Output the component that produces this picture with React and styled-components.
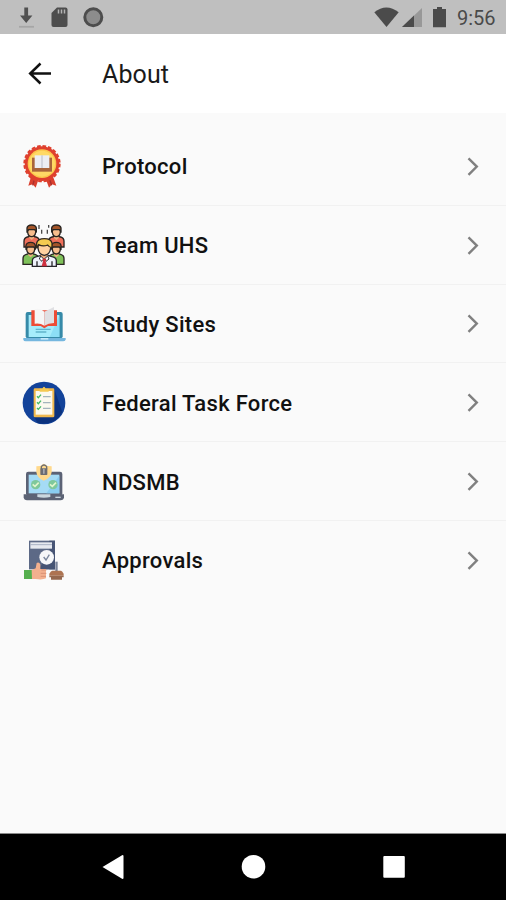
import styled, { createGlobalStyle } from "styled-components";

const GlobalStyle = createGlobalStyle`
  body {
    margin: 0;
    background: #fafafa;
    font-family: Roboto, "Liberation Sans", sans-serif;
  }
`;

const Screen = styled.div`
  width: 506px;
  height: 900px;
  display: flex;
  flex-direction: column;
  overflow: hidden;
  background: #fafafa;
`;

const StatusBar = styled.div`
  height: 34px;
  flex: none;
  display: flex;
  justify-content: space-between;
  background: #bfbfbf;
`;

const StatusGroup = styled.div`
  display: flex;
`;

const Clock = styled.span`
  width: 49px;
  line-height: 36px;
  font-size: 20px;
  color: #4a4a4a;
`;

const Header = styled.header`
  height: 79px;
  flex: none;
  display: flex;
  align-items: center;
  background: #fff;
`;

const BackButton = styled.button`
  width: 102px;
  height: 79px;
  padding: 0;
  border: none;
  background: none;
  text-align: left;
  display: flex;
`;

const Title = styled.h1`
  margin: 0;
  padding-top: 2px;
  font-size: 25px;
  font-weight: 400;
  letter-spacing: 0.1px;
  color: #1a1a1a;
`;

const Menu = styled.ul`
  flex: 1;
  margin: 0;
  padding: 14px 0 0;
  list-style: none;
`;

const MenuItem = styled.li`
  height: 78.8px;
  box-sizing: border-box;
  display: flex;
  align-items: center;
  padding: 2px 21px 0 15px;
  border-bottom: 1px solid ${({ $last }) => ($last ? "transparent" : "#f1f1f1")};
`;

const Label = styled.span`
  flex: 1;
  margin-left: 27px;
  font-size: 22px;
  font-weight: 500;
  letter-spacing: 0.3px;
  color: #111;
`;

const NavBar = styled.nav`
  height: 66px;
  flex: none;
  display: flex;
  justify-content: center;
  background: #000;
  border-top: 1px solid #8a8a8a;
`;

const ProtocolIcon = () => (
  <svg width="60" height="60" viewBox="0 -5 180 180">
    <path d="M50 108 40 141l13-4 9 10 11-32zM112 108l12 33-13-4-9 10-12-32z" fill="#d9402f" />
    <path d="M59 120l-6 20M103 120l7 20" stroke="#a92f2c" strokeWidth="4" />
    <circle cx="81" cy="75" r="52" fill="#df402e" />
    <circle cx="81" cy="75" r="53" fill="none" stroke="#df402e" strokeWidth="6" strokeDasharray="11 5.65" />
    <circle cx="81" cy="75" r="43" fill="#fbc64c" />
    <circle cx="81" cy="75" r="39" fill="#ffd965" />
    <path d="M51 57h60v42H51z" fill="#a9653b" />
    <path d="M59 50h44v38H59z" fill="#eceef3" />
    <path d="M81 50v38" stroke="#b8bcc8" strokeWidth="3" />
  </svg>
);

const Person = ({ x, y, body, hair }) => (
  <g transform={`translate(${x} ${y})`} stroke="#292522" strokeWidth="4">
    <path d="M-23 62V45q0-10 10-13l8-2H5l8 2q10 3 10 13v17z" fill={body} />
    <path d="M-7 27h14v8l-7 6-7-6z" fill="#efb080" stroke="none" />
    <path d="M-12 8h24v10q-2 13-12 13T-12 18z" fill="#f7bd8d" />
    <path d="M-14 15V5Q-12-4 0-4T14 5v10l-5-5H-9z" fill={hair} />
  </g>
);

const TeamIcon = () => (
  <svg width="60" height="60" viewBox="0 -3 180 180">
    <Person x={50} y={28} body="#ef705b" hair="#a45529" />
    <Person x={124} y={28} body="#ef705b" hair="#a45529" />
    <path d="M72 24v12M80 38v12M97 38v12M101 24v8" stroke="#4b4b4b" strokeWidth="4" />
    <Person x={47} y={80} body="#7fc15a" hair="#a45529" />
    <Person x={124} y={80} body="#7fc15a" hair="#a45529" />
    <path d="M52 148v-17q0-9 13-12l14-4h18l14 4q13 3 13 12v17z" fill="#eef1fa" stroke="#28272c" strokeWidth="4" />
    <path d="M77 103h21v14l-10 10-11-10z" fill="#f0ad79" />
    <path d="M69 84h38v9q-2 20-19 22-17-2-19-22z" fill="#ffd0a0" stroke="#28272c" strokeWidth="4" />
    <path d="M65 94V78q3-13 23-13t23 13v14q-8 0-13-8-14 6-27-1z" fill="#f4ca50" stroke="#33291f" strokeWidth="4" />
    <path d="M77 117l10 10 11-10 4 9-9 7-6-6-6 6-8-7z" fill="#fff" stroke="#28272c" strokeWidth="3" />
    <path d="M82 125h12l-2 8 4 15H80l4-15z" fill="#cf3140" />
    <path d="M66 133v15M111 133v15" stroke="#28272c" strokeWidth="4" />
  </svg>
);

const StudyIcon = () => (
  <svg width="60" height="60" viewBox="0 -3 180 180">
    <rect x="32" y="51" width="111" height="79" rx="6" fill="#368aa8" />
    <path d="M41 60h92v66H41z" fill="#a6ecfb" />
    <path d="M104 126l29-64v64z" fill="#8cdef6" />
    <path d="M49 46h77v47H99l-11 7-11-7H49z" fill="#ed4c36" />
    <path d="M59 42q17-4 29 8v42q-13-9-29-6z" fill="#f6f6f6" />
    <path d="M88 50l29-14v48q-17 0-29 8z" fill="#e0e0e3" />
    <path d="M62 103h45M62 111h32" stroke="#62b4cc" strokeWidth="4" />
    <path d="M25 129h127v5q-2 5-8 5H32q-6 0-7-5z" fill="#75b7df" />
    <path d="M77 129h23v5H77z" fill="#c4e9fb" />
  </svg>
);

const TaskIcon = () => (
  <svg width="60" height="60" viewBox="0 -1 180 180">
    <circle cx="87" cy="89" r="64" fill="#13439a" />
    <path d="M58 131l10 19q54 7 74-33l-24-70z" fill="#0b327e" />
    <rect x="56" y="45" width="62" height="87" rx="4" fill="#efb84d" />
    <path d="M62 53h50v71H62z" fill="#fbf9ef" />
    <path d="M74 46h8q5-11 10 0h9v9H74z" fill="#f5c951" />
    <path d="M66 69l4 4 8-9M66 87l4 4 8-9M66 104l4 4 8-9" fill="none" stroke="#43ba64" strokeWidth="4" />
    <path d="M84 70h23M84 88h23M84 105h23" stroke="#a4b4bd" strokeWidth="4" />
  </svg>
);

const SecurityIcon = () => (
  <svg width="60" height="60" viewBox="0 -2 180 180">
    <rect x="33" y="57" width="109" height="72" rx="7" fill="#5b6275" />
    <path d="M41 66h92v56H41z" fill="#a5dbf5" />
    <path d="M94 122l39-53v53z" fill="#8acdf0" />
    <path d="M26 125h121v9q-1 9-10 9H36q-9 0-10-9z" fill="#5c6375" />
    <path d="M67 125h39v8q-19 5-39 0z" fill="#cbd8df" />
    <path d="M121 134h16" stroke="#cad6df" strokeWidth="4" />
    <path d="M64 41q14 0 22-8 9 8 24 8v18q-3 18-24 25-19-7-22-25z" fill="#ffd98c" />
    <path d="M79 50V42q8-10 16 0v8" fill="none" stroke="#6b6c72" strokeWidth="4" />
    <rect x="76" y="47" width="21" height="20" rx="2" fill="#6b6c72" />
    <path d="M84 48h5v15h-5z" fill="#a7a9ae" />
    <circle cx="62" cy="96" r="14" fill="#7ec89b" />
    <circle cx="114" cy="96" r="14" fill="#7ec89b" />
    <path d="M53 95l7 6 11-11M105 95l7 6 11-11" fill="none" stroke="#e2f5cc" strokeWidth="5" />
  </svg>
);

const ApprovalIcon = () => (
  <svg width="60" height="60" viewBox="0 2 180 180">
    <path d="M42 31h78v86H42z" fill="#5c6986" />
    <path d="M103 31h17v86h-17z" fill="#485575" />
    <path d="M46 36h65v19H46z" fill="#e6e9ef" />
    <path d="M46 43h65" stroke="#a9b1c3" strokeWidth="3" />
    <path d="M70 117l39-53h11v53z" fill="#465474" />
    <circle cx="95" cy="81" r="22" fill="#f6f7f9" />
    <path d="M86 80l7 9 10-16" fill="none" stroke="#7b879d" strokeWidth="4" />
    <path d="M27 119h29v27H27z" fill="#56af4f" />
    <path d="M50 119l12-5 3-16q7-4 11 4v14h17v28q-10 5-31 2H51z" fill="#f3b08e" />
    <path d="M79 119h15M77 129h17M77 138h16" stroke="#d99175" strokeWidth="3" />
    <path d="M121 94h7v28h-7z" fill="#79839a" />
    <path d="M112 121h26q3 0 8 9v6h-43v-6q5-9 9-9z" fill="#ad7351" />
    <path d="M103 136h43v5h-5v7h-33v-7h-5z" fill="#95684e" />
  </svg>
);

const menuItems = [
  { label: "Protocol", Icon: ProtocolIcon },
  { label: "Team UHS", Icon: TeamIcon },
  { label: "Study Sites", Icon: StudyIcon },
  { label: "Federal Task Force", Icon: TaskIcon },
  { label: "NDSMB", Icon: SecurityIcon },
  { label: "Approvals", Icon: ApprovalIcon },
];

const App = () => {
  return (
    <>
      <GlobalStyle />
      <Screen>
        <StatusBar>
          <svg width="120" height="34" viewBox="0 0 120 34">
            <path d="M24.3 7.5h3.8v8h4.3L26.2 23 20 15.5h4.3z" fill="#505050" />
            <path d="M19 26.8h15" stroke="#a6a6a6" strokeWidth="1.8" />
            <path d="M57 7.5h8.5q2 0 2 2V25q0 2-2 2h-12q-2 0-2-2V13z" fill="#4d4d4d" />
            <path d="M58.5 9.5v4M61.5 9.5v4M64.5 9.5v4" stroke="#b3b3b3" strokeWidth="1.5" />
            <circle cx="93.3" cy="17.3" r="8.5" fill="#8c8c8c" stroke="#4d4d4d" strokeWidth="3" />
          </svg>
          <StatusGroup>
            <svg width="87" height="34" viewBox="370 0 87 34">
              <path d="M374.300 12.200q12-9.500 24.400 0L386.500 27z" fill="#4b4b4b" />
              <path d="M402 27l20-19v19z" fill="#989898" />
              <path d="M402 27l12-11.400V27z" fill="#4b4b4b" />
              <path d="M437 7h5v2h4v18.200h-13V9h4z" fill="#4b4b4b" />
            </svg>
            <Clock>9:56</Clock>
          </StatusGroup>
        </StatusBar>
        <Header>
          <BackButton aria-label="Back">
            <svg width="60" height="79" viewBox="0 34 60 79">
              <path d="M51 73.500H30M40.500 63.500l-10.300 10 10.300 10" fill="none" stroke="#111" strokeWidth="2.500" />
            </svg>
          </BackButton>
          <Title>About</Title>
        </Header>
        <Menu>
          {menuItems.map(({ label, Icon }, index) => (
            <MenuItem key={label} $last={index === menuItems.length - 1}>
              <Icon />
              <Label>{label}</Label>
              <svg width="24" height="24" viewBox="0 0 24 24">
                <path d="M7.500 3.300l8.300 8.300-8.300 8.300" fill="none" stroke="#808080" strokeWidth="2.400" />
              </svg>
            </MenuItem>
          ))}
        </Menu>
        <NavBar>
          <svg width="506" height="66" viewBox="0 834 506 66">
            <path d="M102.500 867l20-12q1 0 1 1v22q0 1-1 1z" fill="#fff" />
            <circle cx="253.500" cy="866.700" r="11.800" fill="#fff" />
            <rect x="383.300" y="856" width="21.500" height="21.800" rx="1" fill="#fff" />
          </svg>
        </NavBar>
      </Screen>
    </>
  );
};

export default App;
